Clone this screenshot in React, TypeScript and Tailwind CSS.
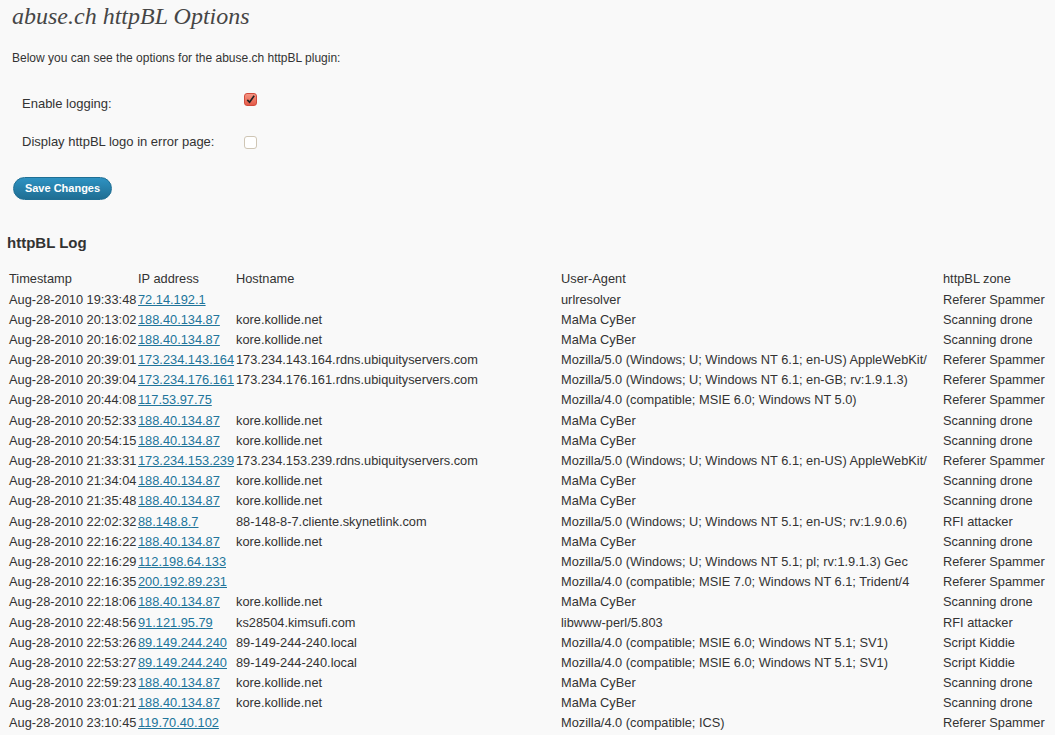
const rows: [string, string, string, string, string][] = [
  ["Aug-28-2010 19:33:48", "72.14.192.1", "", "urlresolver", "Referer Spammer"],
  ["Aug-28-2010 20:13:02", "188.40.134.87", "kore.kollide.net", "MaMa CyBer", "Scanning drone"],
  ["Aug-28-2010 20:16:02", "188.40.134.87", "kore.kollide.net", "MaMa CyBer", "Scanning drone"],
  ["Aug-28-2010 20:39:01", "173.234.143.164", "173.234.143.164.rdns.ubiquityservers.com", "Mozilla/5.0 (Windows; U; Windows NT 6.1; en-US) AppleWebKit/", "Referer Spammer"],
  ["Aug-28-2010 20:39:04", "173.234.176.161", "173.234.176.161.rdns.ubiquityservers.com", "Mozilla/5.0 (Windows; U; Windows NT 6.1; en-GB; rv:1.9.1.3)", "Referer Spammer"],
  ["Aug-28-2010 20:44:08", "117.53.97.75", "", "Mozilla/4.0 (compatible; MSIE 6.0; Windows NT 5.0)", "Referer Spammer"],
  ["Aug-28-2010 20:52:33", "188.40.134.87", "kore.kollide.net", "MaMa CyBer", "Scanning drone"],
  ["Aug-28-2010 20:54:15", "188.40.134.87", "kore.kollide.net", "MaMa CyBer", "Scanning drone"],
  ["Aug-28-2010 21:33:31", "173.234.153.239", "173.234.153.239.rdns.ubiquityservers.com", "Mozilla/5.0 (Windows; U; Windows NT 6.1; en-US) AppleWebKit/", "Referer Spammer"],
  ["Aug-28-2010 21:34:04", "188.40.134.87", "kore.kollide.net", "MaMa CyBer", "Scanning drone"],
  ["Aug-28-2010 21:35:48", "188.40.134.87", "kore.kollide.net", "MaMa CyBer", "Scanning drone"],
  ["Aug-28-2010 22:02:32", "88.148.8.7", "88-148-8-7.cliente.skynetlink.com", "Mozilla/5.0 (Windows; U; Windows NT 5.1; en-US; rv:1.9.0.6)", "RFI attacker"],
  ["Aug-28-2010 22:16:22", "188.40.134.87", "kore.kollide.net", "MaMa CyBer", "Scanning drone"],
  ["Aug-28-2010 22:16:29", "112.198.64.133", "", "Mozilla/5.0 (Windows; U; Windows NT 5.1; pl; rv:1.9.1.3) Gec", "Referer Spammer"],
  ["Aug-28-2010 22:16:35", "200.192.89.231", "", "Mozilla/4.0 (compatible; MSIE 7.0; Windows NT 6.1; Trident/4", "Referer Spammer"],
  ["Aug-28-2010 22:18:06", "188.40.134.87", "kore.kollide.net", "MaMa CyBer", "Scanning drone"],
  ["Aug-28-2010 22:48:56", "91.121.95.79", "ks28504.kimsufi.com", "libwww-perl/5.803", "RFI attacker"],
  ["Aug-28-2010 22:53:26", "89.149.244.240", "89-149-244-240.local", "Mozilla/4.0 (compatible; MSIE 6.0; Windows NT 5.1; SV1)", "Script Kiddie"],
  ["Aug-28-2010 22:53:27", "89.149.244.240", "89-149-244-240.local", "Mozilla/4.0 (compatible; MSIE 6.0; Windows NT 5.1; SV1)", "Script Kiddie"],
  ["Aug-28-2010 22:59:23", "188.40.134.87", "kore.kollide.net", "MaMa CyBer", "Scanning drone"],
  ["Aug-28-2010 23:01:21", "188.40.134.87", "kore.kollide.net", "MaMa CyBer", "Scanning drone"],
  ["Aug-28-2010 23:10:45", "119.70.40.102", "", "Mozilla/4.0 (compatible; ICS)", "Referer Spammer"],
];

const cols = "grid grid-cols-[130px_98px_325px_382px_1fr]";

export default function App() {
  return (
    <div className="h-[735px] w-[1055px] overflow-hidden bg-[#f9f9f9] font-['Liberation_Sans',Arial,sans-serif] text-[#333]">
      {/* page header */}
      <h2 className="pl-[12px] pt-[3px] font-['Liberation_Serif','Times_New_Roman',serif] text-[24px] leading-[27px] italic text-[#464646]">
        abuse.ch httpBL Options
      </h2>
      <p className="mt-[21px] pl-[12px] text-[12px] leading-[15px]">
        Below you can see the options for the abuse.ch httpBL plugin:
      </p>

      {/* options */}
      <div className="mt-[23px] grid grid-cols-[222px_1fr] gap-y-[23px] pl-[22px] text-[13px] leading-[15px]">
        <div className="pt-[7px]">Enable logging:</div>
        <div className="pt-[4px]">
          <span className="flex h-[13px] w-[13px] items-center justify-center rounded-[3px] border border-[#d24b3c] bg-gradient-to-b from-[#f59584] to-[#e45a48]">
            <svg viewBox="0 0 12 12" className="h-[11px] w-[11px]">
              <path d="M2.5 6.5 L5 9 L10 2" fill="none" stroke="#222" strokeWidth="1.8" />
            </svg>
          </span>
        </div>
        <div>Display httpBL logo in error page:</div>
        <div className="pt-[2px]">
          <span className="block h-[13px] w-[13px] rounded-[3px] border border-[#cfc6b5] bg-white" />
        </div>
      </div>

      <button className="ml-[13px] mt-[28px] h-[23px] w-[99px] rounded-full border border-[#1f6f94] bg-gradient-to-b from-[#2e92c2] to-[#1f6e93] text-[11px] font-bold text-white">
        Save Changes
      </button>

      <h3 className="mt-[34px] pl-[7px] text-[15px] font-bold leading-[18px]">httpBL Log</h3>

      {/* log table */}
      <div className="mt-[17px] pl-[8px] text-[12.8px]">
        <div className={`${cols} h-[20px] items-center`}>
          <div className="pl-[1px]">Timestamp</div>
          <div>IP address</div>
          <div>Hostname</div>
          <div>User-Agent</div>
          <div>httpBL zone</div>
        </div>
        {rows.map(([ts, ip, host, ua, zone], i) => (
          <div key={i} className={`${cols} h-[20.19px] items-center whitespace-nowrap`}>
            <div className="pl-[1px]">{ts}</div>
            <div>
              <a href="#" className="text-[#21759b] underline">{ip}</a>
            </div>
            <div>{host}</div>
            <div>{ua}</div>
            <div>{zone}</div>
          </div>
        ))}
      </div>
    </div>
  );
}
